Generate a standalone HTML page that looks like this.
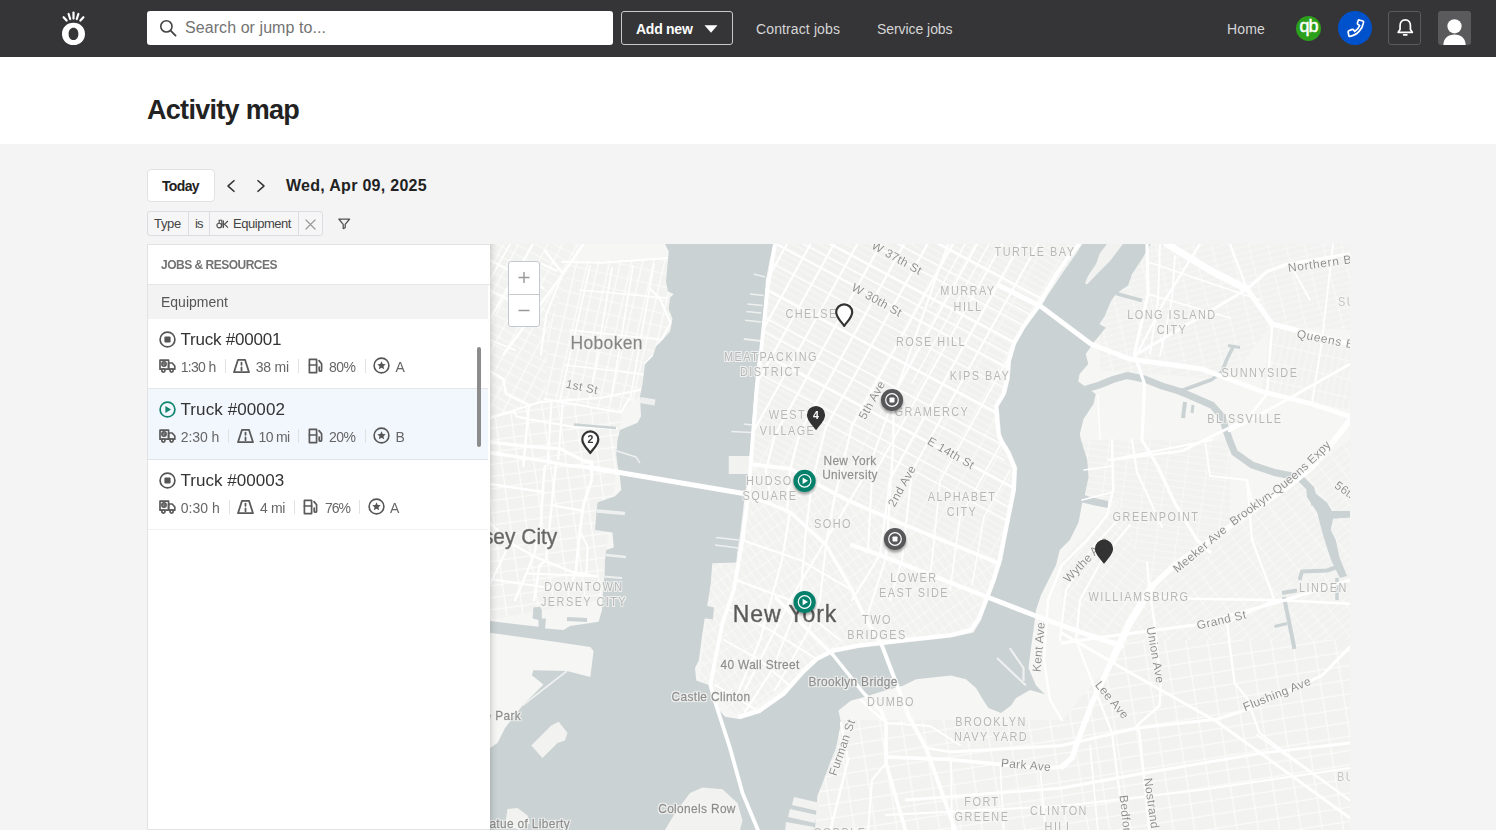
<!DOCTYPE html>
<html lang="en">
<head>
<meta charset="utf-8">
<title>Activity map</title>
<style>
*{box-sizing:border-box;margin:0;padding:0}
html,body{width:1496px;height:830px;overflow:hidden;background:#f4f4f4;font-family:"Liberation Sans",sans-serif;color:#333}
.abs{position:absolute}
.t{position:absolute;white-space:nowrap;line-height:1}
#topbar{position:absolute;left:0;top:0;width:1496px;height:57px;background:#353537}
#search{position:absolute;left:147px;top:11px;width:466px;height:34px;background:#fff;border-radius:3px}
#addnew{position:absolute;left:621px;top:11px;width:112px;height:34px;border:1px solid #c9c9c9;border-radius:3px}
#titleband{position:absolute;left:0;top:57px;width:1496px;height:87px;background:#fff}
#today{position:absolute;left:147px;top:169px;width:68px;height:33px;background:#fff;border:1px solid #e2e2e2;border-radius:4px}
#chip{position:absolute;left:147px;top:211px;width:176px;height:25px;border:1px solid #dcdce2;border-radius:3px;background:#f6f6f6}
#chip i{position:absolute;top:0;width:1px;height:23px;background:#dcdce2}
#panel{position:absolute;left:147px;top:244px;width:343px;height:586px;background:#fff;border:1px solid #e3e3e3;border-right:none}
#phead{position:absolute;left:0;top:0;width:342px;height:40px;border-bottom:1px solid #e6e6e6}
#pgroup{position:absolute;left:0;top:40px;width:340px;height:34px;background:#f3f3f3}
.row{position:absolute;left:0;width:340px;height:71px;border-bottom:1px solid #e4e6ea}
.row.sel{background:#f2f6fd;border-bottom:1px solid #dfe3ea}
.sep{position:absolute;width:1px;height:14px;background:#e2e2e2}
#scroll{position:absolute;left:477px;top:347px;width:4px;height:100px;background:#8c8c8c;border-radius:2px}
#map{position:absolute;left:490px;top:244px;width:860px;height:586px;background:#f6f6f4;overflow:hidden}
#pshadow{position:absolute;left:490px;top:244px;width:8px;height:586px;background:linear-gradient(90deg,rgba(0,0,0,.13),rgba(0,0,0,.04) 45%,rgba(0,0,0,0))}
#zoomctl{position:absolute;left:508px;top:261px;width:32px;height:66px;background:#fff;border:1px solid #c4c8cf;border-radius:3px}
</style>
</head>
<body>
<div id="topbar">
  <svg class="abs" style="left:60px;top:10px" width="28" height="36" viewBox="60 10 28 36">
    <path fill="#fff" fill-rule="evenodd" d="M73.5 22.800c6.600 0 11.500 4.700 11.500 11.100s-4.900 11.100-11.500 11.100S62 40.300 62 33.900s4.900-11.100 11.500-11.100zm0 5c-2.900 0-4.900 2.500-4.900 6.100s2 6.100 4.900 6.100 4.900-2.500 4.900-6.100-2-6.100-4.900-6.100z"/>
    <g stroke="#fff" stroke-width="2.2" stroke-linecap="round">
      <line x1="73.5" y1="12.6" x2="73.5" y2="18.6"/>
      <line x1="68.6" y1="14" x2="70.2" y2="19"/>
      <line x1="78.4" y1="14" x2="76.8" y2="19"/>
      <line x1="63.6" y1="17.2" x2="66.6" y2="20.6"/>
      <line x1="83.4" y1="17.2" x2="80.4" y2="20.6"/>
    </g>
  </svg>
  <div id="search">
    <svg class="abs" style="left:12px;top:8px" width="18" height="18" viewBox="0 0 18 18"><circle cx="7.4" cy="7.4" r="5.6" fill="none" stroke="#444" stroke-width="1.6"/><line x1="11.6" y1="11.6" x2="16.6" y2="16.6" stroke="#444" stroke-width="1.8" stroke-linecap="round"/></svg>
    <span class="t" id="s_search" style="letter-spacing:0.07px;left:38px;top:9px;font-size:16px;color:#737373">Search or jump to...</span>
  </div>
  <div id="addnew">
    <span class="t" id="s_addnew" style="letter-spacing:-0.26px;left:14px;top:10px;font-size:14px;font-weight:bold;color:#fff">Add new</span>
    <svg class="abs" style="left:82px;top:13px" width="14" height="8" viewBox="0 0 14 8"><path d="M0.5 0.3h13L7 7.8z" fill="#fff"/></svg>
  </div>
  <span class="t" id="s_contract" style="letter-spacing:0.12px;left:756px;top:22px;font-size:14px;color:#d6d6d6">Contract jobs</span>
  <span class="t" id="s_service" style="letter-spacing:-0.06px;left:877px;top:22px;font-size:14px;color:#d6d6d6">Service jobs</span>
  <span class="t" id="s_home" style="letter-spacing:0.16px;left:1227px;top:22px;font-size:14px;color:#d6d6d6">Home</span>
  <div class="abs" style="left:1296px;top:16px;width:25px;height:25px;border-radius:50%;background:#2ca01c"></div>
  <span class="t" id="s_qb" style="left:1299.500px;top:17px;font-size:18px;color:#fff;letter-spacing:-1px;-webkit-text-stroke:.5px #fff">qb</span>
  <div class="abs" style="left:1338px;top:11px;width:34px;height:34px;border-radius:50%;background:#0052cc"></div>
  <svg class="abs" style="left:1343.500px;top:16.500px" width="23" height="23" viewBox="0 0 20 20"><path d="M13.2 2.6l3.2.9c.5.2.7.6.6 1.100C16 10.600 11.600 15.800 5.200 16.800c-.5.100-.9-.2-1-.7l-.6-3c-.1-.5.200-.9.600-1.100l3-1.200c.4-.2.900 0 1.100.3l1 1.500c2-1.200 3.500-3 4.300-5.200l-1.500-1c-.4-.3-.5-.7-.4-1.100l.6-2.100c.1-.5.500-.7.900-.6z" fill="none" stroke="#fff" stroke-width="1.500" stroke-linejoin="round"/></svg>
  <div class="abs" style="left:1388px;top:11px;width:33px;height:34px;border:1px solid #5b5b5e;border-radius:3px"></div>
  <svg class="abs" style="left:1393.500px;top:17px" width="22.500" height="22.500" viewBox="0 0 20 20"><path d="M10 2.600c-3 0-4.600 2.300-4.600 5v3.600l-1.700 2.400h12.600l-1.700-2.400V7.600c0-2.700-1.600-5-4.600-5z" fill="none" stroke="#fff" stroke-width="1.500" stroke-linejoin="round"/><path d="M8.600 15.800h2.800" stroke="#fff" stroke-width="1.600" stroke-linecap="round"/></svg>
  <div class="abs" style="left:1438px;top:11px;width:33px;height:34px;background:#5a5a5c;border-radius:3px;overflow:hidden">
    <svg width="33" height="34" viewBox="0 0 33 34"><circle cx="16.500" cy="15.300" r="7.100" fill="#fff"/><path d="M5.300 34.500c0-7.300 4.600-11.100 11.200-11.100s11.200 3.800 11.200 11.100z" fill="#fff"/></svg>
  </div>
</div>
<div id="titleband">
  <span class="t" id="s_title" style="left:147px;top:40px;font-size:27px;font-weight:bold;color:#222;letter-spacing:-0.71px">Activity map</span>
</div>
<div id="today"><span class="t" id="s_today" style="letter-spacing:-0.64px;left:14px;top:9px;font-size:14px;font-weight:bold;color:#222">Today</span></div>
<svg class="abs" style="left:224px;top:178px" width="14" height="16" viewBox="0 0 14 16"><path d="M10.500 2.600L3 8l7.500 5.400" fill="none" stroke="#333" stroke-width="1.600" stroke-linecap="round" stroke-linejoin="round" transform="translate(1.500 0) scale(.82 1)"/></svg>
<svg class="abs" style="left:254px;top:178px" width="14" height="16" viewBox="0 0 14 16"><path d="M3.500 2.600L11 8l-7.500 5.400" fill="none" stroke="#333" stroke-width="1.600" stroke-linecap="round" stroke-linejoin="round" transform="translate(1 0) scale(.82 1)"/></svg>
<span class="t" id="s_date" style="letter-spacing:0.29px;left:286px;top:178px;font-size:16px;font-weight:bold;color:#222">Wed, Apr 09, 2025</span>
<div id="chip">
  <i style="left:40px"></i><i style="left:61px"></i><i style="left:150px"></i>
  <span class="t" id="s_type" style="letter-spacing:-0.3px;left:6px;top:5px;font-size:13px;color:#444">Type</span>
  <span class="t" id="s_is" style="letter-spacing:-0.9px;left:47px;top:5px;font-size:13px;color:#444">is</span>
  <svg class="abs" style="left:68px;top:6px" width="13" height="12" viewBox="0 0 13 12"><g fill="none" stroke="#505050" stroke-width="1.150"><circle cx="3.200" cy="7.500" r="2.300"/><path d="M3.200 5V2.200h2.600v7.300M5.800 6h1.600M7.400 2.500v7.500M12 3L8.400 6.200 12 9.600"/></g></svg>
  <span class="t" id="s_equip" style="letter-spacing:-0.46px;left:85px;top:5px;font-size:13px;color:#444">Equipment</span>
  <svg class="abs" style="left:157px;top:7px" width="11" height="11" viewBox="0 0 11 11"><path d="M1 1l9 9M10 1l-9 9" stroke="#999" stroke-width="1.200" stroke-linecap="round"/></svg>
</div>
<svg class="abs" style="left:337px;top:217px" width="14" height="13" viewBox="0 0 14 13"><path d="M1.800 2h10.800L8.200 7.400v3.300L6.200 11.600V7.400z" fill="none" stroke="#505050" stroke-width="1.250" stroke-linejoin="round"/></svg>

<div id="map"><svg width="860" height="586" viewBox="490 244 860 586" style="position:absolute;left:0;top:0;font-family:'Liberation Sans',sans-serif">
<defs>
<pattern id="gM" width="20.500" height="6.350" patternUnits="userSpaceOnUse" patternTransform="translate(857.060 286.900) rotate(29)"><rect x=".8" y=".7" width="18.900" height="4.950" fill="#f1f2f0"/></pattern>
<pattern id="gH" width="10.7" height="13" patternUnits="userSpaceOnUse" patternTransform="rotate(13)"><rect x="0.7" y="0.45" width="9.3" height="12.1" fill="#f2f3f1"/><path d="M0 0V13" stroke="#fff" stroke-width="1.4" opacity="1"/><path d="M0 0H10.7" stroke="#fff" stroke-width="0.9" opacity="1"/></pattern>
<pattern id="gJ" width="13" height="9" patternUnits="userSpaceOnUse" patternTransform="rotate(28)"><rect x="0.65" y="0.45" width="11.7" height="8.1" fill="#f2f3f1"/><path d="M0 0V9" stroke="#fff" stroke-width="1.3" opacity="0.95"/><path d="M0 0H13" stroke="#fff" stroke-width="0.9" opacity="0.95"/></pattern>
<pattern id="gJ2" width="16" height="12" patternUnits="userSpaceOnUse" patternTransform="rotate(-8)"><rect x="0.7" y="0.6" width="14.6" height="10.8" fill="#f2f3f1"/><path d="M0 0V12" stroke="#fff" stroke-width="1.4" opacity="0.95"/><path d="M0 0H16" stroke="#fff" stroke-width="1.2" opacity="0.95"/></pattern>
<pattern id="gB" width="16" height="6.5" patternUnits="userSpaceOnUse" patternTransform="rotate(-38)"><rect x="0.5" y="0.35" width="15" height="5.8" fill="#f2f3f1"/><path d="M0 0V6.5" stroke="#fff" stroke-width="1" opacity="0.7"/><path d="M0 0H16" stroke="#fff" stroke-width="0.7" opacity="0.7"/></pattern>
<pattern id="gB2" width="21" height="14" patternUnits="userSpaceOnUse" patternTransform="rotate(-9)"><rect x="0.65" y="0.6" width="19.7" height="12.8" fill="#f2f3f1"/><path d="M0 0V14" stroke="#fff" stroke-width="1.3" opacity="0.85"/><path d="M0 0H21" stroke="#fff" stroke-width="1.2" opacity="0.85"/></pattern>
<pattern id="gB4" width="20" height="6.5" patternUnits="userSpaceOnUse" patternTransform="rotate(8)"><rect x="0.5" y="0.35" width="19" height="5.8" fill="#f2f3f1"/><path d="M0 0V6.5" stroke="#fff" stroke-width="1" opacity="0.7"/><path d="M0 0H20" stroke="#fff" stroke-width="0.7" opacity="0.7"/></pattern>
<pattern id="gB3" width="7" height="17" patternUnits="userSpaceOnUse" patternTransform="rotate(-52)"><rect x="0.4" y="0.5" width="6.2" height="16" fill="#f2f3f1"/><path d="M0 0V17" stroke="#fff" stroke-width="0.8" opacity="0.7"/><path d="M0 0H7" stroke="#fff" stroke-width="1" opacity="0.7"/></pattern>
<pattern id="gQ" width="18" height="6" patternUnits="userSpaceOnUse" patternTransform="rotate(-14)"><rect x="0.5" y="0.35" width="17" height="5.3" fill="#f2f3f1"/><path d="M0 0V6" stroke="#fff" stroke-width="1" opacity="0.7"/><path d="M0 0H18" stroke="#fff" stroke-width="0.7" opacity="0.7"/></pattern>
<pattern id="gQ2" width="6.5" height="18" patternUnits="userSpaceOnUse" patternTransform="rotate(12)"><rect x="0.35" y="0.5" width="5.8" height="17" fill="#f2f3f1"/><path d="M0 0V18" stroke="#fff" stroke-width="0.7" opacity="0.7"/><path d="M0 0H6.5" stroke="#fff" stroke-width="1" opacity="0.7"/></pattern>
<pattern id="gL" width="12" height="7" patternUnits="userSpaceOnUse" patternTransform="rotate(55)"><rect x="0.5" y="0.4" width="11" height="6.2" fill="#f2f3f1"/><path d="M0 0V7" stroke="#fff" stroke-width="1" opacity="0.75"/><path d="M0 0H12" stroke="#fff" stroke-width="0.8" opacity="0.75"/></pattern>
<filter id="ds" x="-50%" y="-50%" width="200%" height="200%"><feGaussianBlur stdDeviation="1.300"/></filter>
<filter id="halo" filterUnits="userSpaceOnUse" x="490" y="244" width="860" height="586"><feMorphology in="SourceAlpha" operator="dilate" radius="1" result="d"/><feGaussianBlur in="d" stdDeviation=".45" result="b"/><feFlood flood-color="#f6f6f4" flood-opacity=".85"/><feComposite in2="b" operator="in" result="h"/><feMerge><feMergeNode in="h"/><feMergeNode in="SourceGraphic"/></feMerge></filter>
</defs>
<rect x="490" y="244" width="860" height="586" fill="#f6f6f4"/>
<polygon points="770,244 1085,244 1040,300 1006,400 1018,470 1001,565 749,464" fill="url(#gM)"/>
<polygon points="749,464 1001,565 975,632 900,643 820,660 740,718 700,680 712,563 745,494" fill="url(#gL)"/>
<polygon points="560,262 668,258 672,330 640,396 621,412 545,399 548,330" fill="url(#gH)"/>
<polygon points="490,244 578,244 548,330 545,399 490,420" fill="url(#gJ)"/>
<polygon points="490,420 545,399 621,412 620,440 600,600 490,620" fill="url(#gJ2)"/>
<polygon points="1062,560 1118,500 1150,590 1130,640 1062,640" fill="url(#gB3)"/>
<polygon points="1150,590 1230,525 1350,440 1350,640 1130,640" fill="url(#gB)"/>
<polygon points="1082,440 1230,440 1230,525 1150,590 1118,500 1082,500" fill="url(#gB4)"/>
<polygon points="830,720 1062,720 1130,640 1350,640 1350,830 815,830" fill="url(#gB2)"/>
<polygon points="1100,300 1150,244 1350,244 1350,330 1270,326 1230,380 1100,370" fill="url(#gQ)"/>
<polygon points="1270,326 1350,344 1350,410 1262,391" fill="url(#gQ2)"/>
<polyline points="936,242.26 1080,319.3" fill="none" stroke="#fff" stroke-width="2.4" stroke-linejoin="round" stroke-linecap="round"/>
<polyline points="775,214.425 1045,358.875" fill="none" stroke="#fff" stroke-width="2.4" stroke-linejoin="round" stroke-linecap="round"/>
<polyline points="770,240.75 1030,379.85" fill="none" stroke="#fff" stroke-width="2" stroke-linejoin="round" stroke-linecap="round"/>
<polyline points="760,286.2 1015,422.625" fill="none" stroke="#fff" stroke-width="2.4" stroke-linejoin="round" stroke-linecap="round"/>
<polyline points="752,347.82 1020,491.2" fill="none" stroke="#fff" stroke-width="2.6" stroke-linejoin="round" stroke-linecap="round"/>
<polyline points="790,200.55 1060,345" fill="none" stroke="#fff" stroke-width="1.4" stroke-linejoin="round" stroke-linecap="round"/>
<polyline points="790,186.15 1070,335.95" fill="none" stroke="#fff" stroke-width="1.3" stroke-linejoin="round" stroke-linecap="round"/>
<polyline points="772,227.32 1040,370.7" fill="none" stroke="#fff" stroke-width="1.3" stroke-linejoin="round" stroke-linecap="round"/>
<polyline points="765,259.775 1025,398.875" fill="none" stroke="#fff" stroke-width="1.3" stroke-linejoin="round" stroke-linecap="round"/>
<polyline points="756,312.96 1012,449.92" fill="none" stroke="#fff" stroke-width="1.3" stroke-linejoin="round" stroke-linecap="round"/>
<polyline points="756,327.46 1004,460.14" fill="none" stroke="#fff" stroke-width="1.3" stroke-linejoin="round" stroke-linecap="round"/>
<polyline points="752,369.62 1018,511.93" fill="none" stroke="#fff" stroke-width="1.3" stroke-linejoin="round" stroke-linecap="round"/>
<polyline points="800,409.8 1020,527.5" fill="none" stroke="#fff" stroke-width="1.3" stroke-linejoin="round" stroke-linecap="round"/>
<polyline points="787,244 762,289" fill="none" stroke="#fff" stroke-width="1.8" stroke-linejoin="round" stroke-linecap="round"/>
<polyline points="810.6,244 752,350" fill="none" stroke="#fff" stroke-width="2" stroke-linejoin="round" stroke-linecap="round"/>
<polyline points="834,244 748,399" fill="none" stroke="#fff" stroke-width="2" stroke-linejoin="round" stroke-linecap="round"/>
<polyline points="857.4,244 752,434 750,470" fill="none" stroke="#fff" stroke-width="2" stroke-linejoin="round" stroke-linecap="round"/>
<polyline points="880.8,244 775,435 766,470 770,494" fill="none" stroke="#fff" stroke-width="2.2" stroke-linejoin="round" stroke-linecap="round"/>
<polyline points="904.2,244 800,432 790,470 787,512" fill="none" stroke="#fff" stroke-width="2.2" stroke-linejoin="round" stroke-linecap="round"/>
<polyline points="927.6,244 826,427 812,482 806,530" fill="none" stroke="#fff" stroke-width="2.2" stroke-linejoin="round" stroke-linecap="round"/>
<polyline points="953,244 852,426 834,500 826,545" fill="none" stroke="#fff" stroke-width="2.2" stroke-linejoin="round" stroke-linecap="round"/>
<polyline points="965,244 930,307" fill="none" stroke="#fff" stroke-width="1.4" stroke-linejoin="round" stroke-linecap="round"/>
<polyline points="977,244 893,396 893.5,440 886,557.5 866,620" fill="none" stroke="#fff" stroke-width="2.2" stroke-linejoin="round" stroke-linecap="round"/>
<polyline points="989,244 912,383" fill="none" stroke="#fff" stroke-width="1.4" stroke-linejoin="round" stroke-linecap="round"/>
<polyline points="1002,244 926,381 872,478 868,548" fill="none" stroke="#fff" stroke-width="2" stroke-linejoin="round" stroke-linecap="round"/>
<polyline points="1020,244 890,479 880,555 852,600" fill="none" stroke="#fff" stroke-width="2" stroke-linejoin="round" stroke-linecap="round"/>
<polyline points="1038,244 912,471 902,560 890,600" fill="none" stroke="#fff" stroke-width="2" stroke-linejoin="round" stroke-linecap="round"/>
<polyline points="1016,344 940,481 930,580" fill="none" stroke="#fff" stroke-width="1.6" stroke-linejoin="round" stroke-linecap="round"/>
<polyline points="1003,440 960,517 950,590" fill="none" stroke="#fff" stroke-width="1.6" stroke-linejoin="round" stroke-linecap="round"/>
<polyline points="1010,470 984,517 972,585" fill="none" stroke="#fff" stroke-width="1.4" stroke-linejoin="round" stroke-linecap="round"/>
<polyline points="948,244 893,400 868,470 838,520 790,600 745,690" fill="none" stroke="#fff" stroke-width="2" stroke-linejoin="round" stroke-linecap="round"/>
<polyline points="749,464 791,468.8 816.4,484 847,500 900,523 991,560 1001,565" fill="none" stroke="#fff" stroke-width="3.8" stroke-linejoin="round" stroke-linecap="round"/>
<polyline points="852,545 886,557.5 988.5,597.5" fill="none" stroke="#fff" stroke-width="4.4" stroke-linejoin="round" stroke-linecap="round"/>
<polyline points="745,493.75 790,512 826,545 852,590 866,620" fill="none" stroke="#fff" stroke-width="3.4" stroke-linejoin="round" stroke-linecap="round"/>
<polyline points="776,598 808.5,630.5" fill="none" stroke="#fff" stroke-width="3.4" stroke-linejoin="round" stroke-linecap="round"/>
<polyline points="742,540 800,560 852,590" fill="none" stroke="#fff" stroke-width="2" stroke-linejoin="round" stroke-linecap="round"/>
<polyline points="736,580 790,600 840,640" fill="none" stroke="#fff" stroke-width="2" stroke-linejoin="round" stroke-linecap="round"/>
<polyline points="730,610 770,630 815,658" fill="none" stroke="#fff" stroke-width="2" stroke-linejoin="round" stroke-linecap="round"/>
<polyline points="724,640 760,660 790,686" fill="none" stroke="#fff" stroke-width="1.8" stroke-linejoin="round" stroke-linecap="round"/>
<polyline points="790,512 782,560 760,640 735,700" fill="none" stroke="#fff" stroke-width="2" stroke-linejoin="round" stroke-linecap="round"/>
<polyline points="806,530 800,600 772,670 745,712" fill="none" stroke="#fff" stroke-width="2" stroke-linejoin="round" stroke-linecap="round"/>
<polyline points="826,545 820,600 808.5,630.5 775,690" fill="none" stroke="#fff" stroke-width="2" stroke-linejoin="round" stroke-linecap="round"/>
<polyline points="715,685 740,700 760,712" fill="none" stroke="#fff" stroke-width="2" stroke-linejoin="round" stroke-linecap="round"/>
<polyline points="490,442 523.4,446 559.6,448.6 583.6,460.7 591.7,462" fill="none" stroke="#fff" stroke-width="3.4" stroke-linejoin="round" stroke-linecap="round"/>
<polyline points="490,452.7 543.5,460.7 570,465.8 590,467.5" fill="none" stroke="#fff" stroke-width="3.4" stroke-linejoin="round" stroke-linecap="round"/>
<polyline points="528.8,407.2 523.4,465.8" fill="none" stroke="#fff" stroke-width="2.4" stroke-linejoin="round" stroke-linecap="round"/>
<polyline points="551.5,401.8 547.5,465.8" fill="none" stroke="#fff" stroke-width="2" stroke-linejoin="round" stroke-linecap="round"/>
<polyline points="563,400.5 558.2,459.3" fill="none" stroke="#fff" stroke-width="2" stroke-linejoin="round" stroke-linecap="round"/>
<polyline points="544.8,399 621,412.5 629,399" fill="none" stroke="#fff" stroke-width="2.2" stroke-linejoin="round" stroke-linecap="round"/>
<polyline points="530,405.8 506,393.8 503.4,379 490,371" fill="none" stroke="#fff" stroke-width="2.4" stroke-linejoin="round" stroke-linecap="round"/>
<polyline points="490,417.9 514,411.2 516.8,416.5 528.8,419.2 575.6,427.2 617,428.6" fill="none" stroke="#fff" stroke-width="2" stroke-linejoin="round" stroke-linecap="round"/>
<polyline points="490,418 540,402 600,398 640,390" fill="none" stroke="#fff" stroke-width="2" stroke-linejoin="round" stroke-linecap="round"/>
<polyline points="591.7,462 591.7,480 583.6,504 579.6,533.5 575.6,573.6 573,579" fill="none" stroke="#fff" stroke-width="2.8" stroke-linejoin="round" stroke-linecap="round"/>
<polyline points="581,533.5 587.7,546.9 586.3,576.3" fill="none" stroke="#fff" stroke-width="2" stroke-linejoin="round" stroke-linecap="round"/>
<polyline points="545,466 543.5,480 540.8,524 534,555 522,584 515,600" fill="none" stroke="#fff" stroke-width="2.4" stroke-linejoin="round" stroke-linecap="round"/>
<polyline points="556,466 554.2,480 548.9,533.5 546.2,560 539.5,565.6 536.8,584.3 534,600" fill="none" stroke="#fff" stroke-width="2.4" stroke-linejoin="round" stroke-linecap="round"/>
<polyline points="490,484 543.5,492" fill="none" stroke="#fff" stroke-width="2.4" stroke-linejoin="round" stroke-linecap="round"/>
<polyline points="552.9,505.4 582.3,510.8" fill="none" stroke="#fff" stroke-width="2.4" stroke-linejoin="round" stroke-linecap="round"/>
<polyline points="490,522.8 512.7,544.2 534,556.3 573,572.3 595.7,576.3" fill="none" stroke="#fff" stroke-width="2.4" stroke-linejoin="round" stroke-linecap="round"/>
<polyline points="507.4,548.2 490,584.3" fill="none" stroke="#fff" stroke-width="2" stroke-linejoin="round" stroke-linecap="round"/>
<polyline points="490,579 543.5,587 575,590" fill="none" stroke="#fff" stroke-width="2" stroke-linejoin="round" stroke-linecap="round"/>
<polyline points="527.5,573.6 597,576.3" fill="none" stroke="#fff" stroke-width="2" stroke-linejoin="round" stroke-linecap="round"/>
<polyline points="490,319 532.8,244" fill="none" stroke="#fff" stroke-width="2" stroke-linejoin="round" stroke-linecap="round"/>
<polyline points="503.4,354.8 562.2,274.8 583.6,244" fill="none" stroke="#fff" stroke-width="2.4" stroke-linejoin="round" stroke-linecap="round"/>
<polyline points="540.8,354.8 546.2,315 562.2,274.8" fill="none" stroke="#fff" stroke-width="2" stroke-linejoin="round" stroke-linecap="round"/>
<polyline points="490,260 543.5,288" fill="none" stroke="#fff" stroke-width="1.8" stroke-linejoin="round" stroke-linecap="round"/>
<polyline points="544.8,250.7 562.2,272.8" fill="none" stroke="#fff" stroke-width="2.4" stroke-linejoin="round" stroke-linecap="round"/>
<polyline points="542,264 556.9,270.8" fill="none" stroke="#fff" stroke-width="2" stroke-linejoin="round" stroke-linecap="round"/>
<polyline points="490,290 530,310" fill="none" stroke="#fff" stroke-width="1.6" stroke-linejoin="round" stroke-linecap="round"/>
<polyline points="490,340 515,350" fill="none" stroke="#fff" stroke-width="1.6" stroke-linejoin="round" stroke-linecap="round"/>
<polyline points="510,244 490,280" fill="none" stroke="#fff" stroke-width="1.6" stroke-linejoin="round" stroke-linecap="round"/>
<polyline points="601,262.7 668,258" fill="none" stroke="#fff" stroke-width="2" stroke-linejoin="round" stroke-linecap="round"/>
<polyline points="562,262 601,262.7" fill="none" stroke="#fff" stroke-width="1.8" stroke-linejoin="round" stroke-linecap="round"/>
<polyline points="649.2,288 660,298.8 670.6,323 662.6,337.6 653.2,354.8 645,364" fill="none" stroke="#fff" stroke-width="2" stroke-linejoin="round" stroke-linecap="round"/>
<polyline points="590,266 560,400" fill="none" stroke="#fff" stroke-width="1.6" stroke-linejoin="round" stroke-linecap="round"/>
<polyline points="612,268 590,398" fill="none" stroke="#fff" stroke-width="1.6" stroke-linejoin="round" stroke-linecap="round"/>
<polyline points="633,266 611,400" fill="none" stroke="#fff" stroke-width="1.6" stroke-linejoin="round" stroke-linecap="round"/>
<polyline points="654,264 630,400" fill="none" stroke="#fff" stroke-width="1.6" stroke-linejoin="round" stroke-linecap="round"/>
<polyline points="570,330 665,340" fill="none" stroke="#fff" stroke-width="1.4" stroke-linejoin="round" stroke-linecap="round"/>
<polyline points="580,290 667,298" fill="none" stroke="#fff" stroke-width="1.4" stroke-linejoin="round" stroke-linecap="round"/>
<polyline points="565,365 650,375" fill="none" stroke="#fff" stroke-width="1.4" stroke-linejoin="round" stroke-linecap="round"/>
<polygon points="665,244 668.75,251.5 666,281.5 668,291.5 673.75,294 670,297.75 668.75,309 672.5,319 670,331.5 662.5,340 656,346.5 652.5,356.5 645,364 642.5,384 640,396.5 641,416.5 637.5,422.75 620,430 617.5,440 616.25,455 617.5,465 620,477.5 621.25,490 615,496.25 597.5,502.5 596.25,515 595,530 612.5,532.5 613.75,547.5 606.25,550 605,560 604.5,576.7 603.6,581.7 602,610 598.6,621.8 587,623.5 570,626 563.5,630 545,628.5 546,618.5 541.8,618.5 541.8,610 540,606.8 533.4,607.6 532.6,618.5 538.5,620 538.5,626.8 490,621 490,632.7 556.8,641.9 590.3,646.9 593.6,651 590.3,677 566.9,671 533.4,670.3 531.8,675.3 543.5,684.5 522.5,705.5 505,728 497.5,743 490,748 490,830 815,830 817.5,795.5 822.5,783 830,763 836,748 841,723 838.5,710.5 851,700.5 861,698 881,691.75 903.5,685.5 916,679.25 951,675.5 966,679.25 976,688 983.5,700.5 988.5,708 1001,713 1011,705.5 1016,698 1030,690 1044.75,694.25 1036,685.5 1028.5,668 1031,648 1033.5,630 1036,610 1041,595 1048.5,580 1056,565 1059.75,550 1069.75,540 1078.5,522.5 1082.25,502.5 1095,505.5 1108,508 1108,501 1090,497 1084.75,495 1088.5,477.5 1087.25,460 1081,440 1079.75,434 1083.5,419 1093.5,404 1095.75,394 1087,387.75 1078.25,381.5 1079.5,374 1088.25,364 1085.75,354 1094.5,341.5 1105.75,327.75 1099.5,324 1104.5,316.5 1110.75,301.5 1115.75,294 1128.25,285.25 1132,274 1142,259 1150.75,244 1082.25,244 1076,254 1063.5,271.5 1048.5,294 1041,306.5 1026,326.5 1016,344 1011,361.5 1009.75,379 1006,394 998.5,406.5 999.75,419 1001,434 1003.5,440 1011,452.5 1017.25,467.5 1016,490 1011,515 1006,540 1002.25,560 996,580 988.5,600 981,620 973.5,632.5 951,637.5 901,643 858.5,648 833.5,653 818.5,660.5 805,673 785,695.5 760,713 740,719.25 725,716.75 715,705.5 710,685.5 696.25,680.5 695,668 698.75,660.5 702.2,635.2 704.7,618.5 713,619.3 713.9,607.6 707.2,606 710.6,585 712.3,563.3 736.25,562.5 737.5,550 740,535 742.5,515 745,493.75 748.75,475 750,455 751.25,440 752.5,419 755,384 757.5,361.5 761,344 763.75,309 766,279 770,259 773.25,244" fill="#cad2d3"/>
<polygon points="1306,486 1327,502.5 1332,511 1350,511 1350,517.5 1333,518.75 1330.75,530 1335.75,540 1339.5,557.5 1347,576 1340,578 1331,560 1323,535 1317,512 1307,497" fill="#cad2d3"/>
<polyline points="1086,389 1099.5,385 1113,379.5 1127,375.5 1144.5,379 1162,386 1179.5,391.25 1192,396.5 1212,405.25 1222,416.5 1225.75,429 1229.5,440 1234.5,452.5 1252,465 1274.5,472.5 1299.5,477.5 1311,489 1315,505" fill="none" stroke="#cad2d3" stroke-width="7" stroke-linejoin="round" stroke-linecap="butt"/>
<polyline points="1179.5,391.25 1197,385 1212,379.5 1222,371.5 1227,359 1233.25,346.5" fill="none" stroke="#cad2d3" stroke-width="3.5" stroke-linejoin="round" stroke-linecap="butt"/>
<polyline points="1228,345.5 1240,347.5" fill="none" stroke="#cad2d3" stroke-width="3" stroke-linejoin="round" stroke-linecap="butt"/>
<polyline points="1185,402 1183,418" fill="none" stroke="#cad2d3" stroke-width="4" stroke-linejoin="round" stroke-linecap="butt"/>
<polyline points="1193,405 1192,413" fill="none" stroke="#cad2d3" stroke-width="3" stroke-linejoin="round" stroke-linecap="butt"/>
<polyline points="1116,293.5 1142,300.5" fill="none" stroke="#cad2d3" stroke-width="3.5" stroke-linejoin="round" stroke-linecap="butt"/>
<polyline points="1340,566 1327,570.5 1302,571.5 1299.5,580" fill="none" stroke="#cad2d3" stroke-width="4" stroke-linejoin="round" stroke-linecap="butt"/>
<polyline points="1337,578 1337,600" fill="none" stroke="#cad2d3" stroke-width="3.5" stroke-linejoin="round" stroke-linecap="butt"/>
<polyline points="1282,593 1297,590.5" fill="none" stroke="#cad2d3" stroke-width="4" stroke-linejoin="round" stroke-linecap="butt"/>
<polyline points="1284,597 1294.5,649" fill="none" stroke="#cad2d3" stroke-width="4" stroke-linejoin="round" stroke-linecap="butt"/>
<polyline points="1274.5,626.5 1287,623.5" fill="none" stroke="#cad2d3" stroke-width="3" stroke-linejoin="round" stroke-linecap="butt"/>
<polyline points="567,619 587,620" fill="none" stroke="#cad2d3" stroke-width="4" stroke-linejoin="round" stroke-linecap="butt"/>
<polyline points="574,424.5 616,428" fill="none" stroke="#cad2d3" stroke-width="2.6" stroke-linejoin="round" stroke-linecap="butt"/>
<polygon points="1107,244 1100,253 1096,264 1088,276 1085,283 1087,284.5 1098,273 1110,261 1123,244" fill="#f2f3f1"/>
<polygon points="531.25,745.5 543.75,733 551.25,725.5 558.75,721.75 567.5,733 565,740.5 557.5,743 551.25,749.25 542.5,758" fill="#f2f3f1"/>
<polygon points="507.5,809 517.5,808 527.5,815.5 530,823 520,830 505,826" fill="#f2f3f1"/>
<polygon points="665,830 675,813 690,793 702.5,787.5 722.5,789.25 737.5,803 742.5,820.5 740,830" fill="#f2f3f1"/>
<polygon points="728.75,456 750.5,456 749,474 728.75,474" fill="#f2f3f1"/>
<polygon points="794,797 820,803 818,811 792,805" fill="#f2f3f1"/>
<polygon points="790,809 817,815 815,823 788,817" fill="#f2f3f1"/>
<polygon points="786,822 814,827 813,832 785,832" fill="#f2f3f1"/>
<polyline points="753.75,274 765,277" fill="none" stroke="#eef0ef" stroke-width="1.6" stroke-linejoin="round" stroke-linecap="butt"/>
<polyline points="750,294 763.75,295.5" fill="none" stroke="#eef0ef" stroke-width="1.6" stroke-linejoin="round" stroke-linecap="butt"/>
<polyline points="747.5,304 762.5,305.5" fill="none" stroke="#eef0ef" stroke-width="1.6" stroke-linejoin="round" stroke-linecap="butt"/>
<polyline points="746.25,311.5 761.25,313" fill="none" stroke="#eef0ef" stroke-width="1.6" stroke-linejoin="round" stroke-linecap="butt"/>
<polyline points="745,320.25 761.25,322" fill="none" stroke="#eef0ef" stroke-width="1.6" stroke-linejoin="round" stroke-linecap="butt"/>
<polyline points="743.75,339 761.25,341" fill="none" stroke="#eef0ef" stroke-width="2" stroke-linejoin="round" stroke-linecap="butt"/>
<polyline points="743.75,424 752.5,425" fill="none" stroke="#eef0ef" stroke-width="1.4" stroke-linejoin="round" stroke-linecap="butt"/>
<polyline points="731.25,431.5 751.25,432.5" fill="none" stroke="#eef0ef" stroke-width="1.4" stroke-linejoin="round" stroke-linecap="butt"/>
<polyline points="716,537.5 738.75,540" fill="none" stroke="#eef0ef" stroke-width="1.6" stroke-linejoin="round" stroke-linecap="butt"/>
<polyline points="715,545 738.75,548" fill="none" stroke="#eef0ef" stroke-width="1.6" stroke-linejoin="round" stroke-linecap="butt"/>
<polyline points="597,511 625,513.5" fill="none" stroke="#eef0ef" stroke-width="3.5" stroke-linejoin="round" stroke-linecap="butt"/>
<polyline points="606,555 626,557" fill="none" stroke="#eef0ef" stroke-width="2.5" stroke-linejoin="round" stroke-linecap="butt"/>
<polyline points="603,576.5 622,578" fill="none" stroke="#eef0ef" stroke-width="2" stroke-linejoin="round" stroke-linecap="butt"/>
<polyline points="640,400 655,402.5" fill="none" stroke="#eef0ef" stroke-width="6" stroke-linejoin="round" stroke-linecap="butt"/>
<polyline points="997,658 1026,685.5" fill="none" stroke="#eef0ef" stroke-width="2.2" stroke-linejoin="round" stroke-linecap="butt"/>
<polyline points="1009.75,648 1023.5,668 1023.5,681" fill="none" stroke="#eef0ef" stroke-width="2.2" stroke-linejoin="round" stroke-linecap="butt"/>
<polyline points="617,451 636,457 640,463" fill="none" stroke="#eef0ef" stroke-width="1.4" stroke-linejoin="round" stroke-linecap="butt"/>
<polyline points="566.9,671 522.5,705.5" fill="none" stroke="#eef0ef" stroke-width="1.6" stroke-linejoin="round" stroke-linecap="butt"/>
<polyline points="775,244 767.5,289 761.25,349 756.25,394 752.5,440 748.75,490 742.5,540 733.75,590 722.5,623 715,660.5 710.5,685.5 716.25,705.5 730,748 742.5,793 758.75,832" fill="none" stroke="#fff" stroke-width="3.8" stroke-linejoin="round" stroke-linecap="round"/>
<polyline points="590,467.5 745,493.75" fill="none" stroke="#fff" stroke-width="5.2" stroke-linejoin="round" stroke-linecap="round"/>
<polyline points="866,620 881,643 908.5,715.5 926,748 956,832" fill="none" stroke="#fff" stroke-width="4" stroke-linejoin="round" stroke-linecap="round"/>
<polyline points="808.5,630.5 833.5,655.5 863.5,693 881,710.5 886,723 886,763 896,798 906,832" fill="none" stroke="#fff" stroke-width="3.6" stroke-linejoin="round" stroke-linecap="round"/>
<polyline points="1079,244 1067,259 1056,275 1041,300 1038,306.5 1023.5,326.5 1013.5,344 1008.5,361.5 1007,379 1003.5,394 996,406.5 997,419 998.5,434 1001,441 1008.5,453.5 1014.5,468 1013.5,490 1008.5,515 1003.5,540 999.5,560 993.5,580 986,600 978.5,619 971,630 951,635 901,640.5 858.5,645.5 833,650.5 817,658.5 803,671.5 783.5,693.5 759,711 740,716.5" fill="none" stroke="#fff" stroke-width="4" stroke-linejoin="round" stroke-linecap="round"/>
<polyline points="988.5,597.5 1033.5,615 1088.5,635 1122,646" fill="none" stroke="#fff" stroke-width="5" stroke-linejoin="round" stroke-linecap="round"/>
<polyline points="1000,286 1041,306.5 1091,344 1129.5,359 1202,369 1262,391.5 1312,404 1350,416.5" fill="none" stroke="#fff" stroke-width="4.8" stroke-linejoin="round" stroke-linecap="round"/>
<polyline points="1167,244 1212,271.5 1247,289" fill="none" stroke="#fff" stroke-width="7" stroke-linejoin="round" stroke-linecap="round"/>
<polyline points="1247,289 1272,324 1350,344" fill="none" stroke="#fff" stroke-width="5" stroke-linejoin="round" stroke-linecap="round"/>
<polyline points="1247,289 1267,271.5 1287,264 1350,254" fill="none" stroke="#fff" stroke-width="3" stroke-linejoin="round" stroke-linecap="round"/>
<polyline points="1137,354 1222,304 1247,289" fill="none" stroke="#fff" stroke-width="3" stroke-linejoin="round" stroke-linecap="round"/>
<polyline points="1147,244 1148,294 1134.5,354 1144.5,384 1142,440 1157,465 1174.5,502.5 1197,540 1210,552" fill="none" stroke="#fff" stroke-width="3.2" stroke-linejoin="round" stroke-linecap="round"/>
<polyline points="1272,326.5 1267,394 1247,419 1182,451 1109.5,460" fill="none" stroke="#fff" stroke-width="2.6" stroke-linejoin="round" stroke-linecap="round"/>
<polyline points="1350,364 1297,394 1252,419 1229,431" fill="none" stroke="#fff" stroke-width="2.6" stroke-linejoin="round" stroke-linecap="round"/>
<polyline points="1200,244 1165,300 1137,354" fill="none" stroke="#fff" stroke-width="2.4" stroke-linejoin="round" stroke-linecap="round"/>
<polyline points="1230,244 1247,289" fill="none" stroke="#fff" stroke-width="2.2" stroke-linejoin="round" stroke-linecap="round"/>
<polyline points="1333,244 1322,340 1312,404" fill="none" stroke="#fff" stroke-width="1.8" stroke-linejoin="round" stroke-linecap="round"/>
<polyline points="1160,244 1158,300 1150,354" fill="none" stroke="#fff" stroke-width="1.8" stroke-linejoin="round" stroke-linecap="round"/>
<polyline points="1175,256 1172,300 1160,356" fill="none" stroke="#fff" stroke-width="1.8" stroke-linejoin="round" stroke-linecap="round"/>
<polyline points="1148,262 1260,300" fill="none" stroke="#fff" stroke-width="1.6" stroke-linejoin="round" stroke-linecap="round"/>
<polyline points="1148,294 1230,318" fill="none" stroke="#fff" stroke-width="1.6" stroke-linejoin="round" stroke-linecap="round"/>
<polyline points="1290,264 1310,300" fill="none" stroke="#fff" stroke-width="1.6" stroke-linejoin="round" stroke-linecap="round"/>
<polyline points="1100,440 1098,395" fill="none" stroke="#fff" stroke-width="1.4" stroke-linejoin="round" stroke-linecap="round"/>
<polyline points="1350,420 1334.5,440 1312,467.5 1287,487.5 1232,525 1174.5,565 1151.7,586.8" fill="none" stroke="#fff" stroke-width="5.4" stroke-linejoin="round" stroke-linecap="round"/>
<polyline points="1151.7,586.8 1129.5,623 1112,660.5" fill="none" stroke="#fff" stroke-width="7.5" stroke-linejoin="round" stroke-linecap="round"/>
<polyline points="1112,660.5 1092,703 1077,743 1072,758 1062,766.75" fill="none" stroke="#fff" stroke-width="5.5" stroke-linejoin="round" stroke-linecap="round"/>
<polyline points="1062,766.75 1041,768.5 951,759.5 886,757" fill="none" stroke="#fff" stroke-width="3.6" stroke-linejoin="round" stroke-linecap="round"/>
<polyline points="1062,643 1099.5,637.5 1194.5,625 1277,602.5 1350,580" fill="none" stroke="#fff" stroke-width="3" stroke-linejoin="round" stroke-linecap="round"/>
<polyline points="1147,596 1192,598.75 1277,600 1350,603.75" fill="none" stroke="#fff" stroke-width="2.4" stroke-linejoin="round" stroke-linecap="round"/>
<polyline points="1112,440 1113.25,490 1107,515 1087,540 1062,565 1048,600 1044,660 1050,700 1062,720" fill="none" stroke="#fff" stroke-width="2.4" stroke-linejoin="round" stroke-linecap="round"/>
<polyline points="1118,520 1092,548 1066,590 1060,640" fill="none" stroke="#fff" stroke-width="2" stroke-linejoin="round" stroke-linecap="round"/>
<polyline points="1130,525 1104,556 1080,600 1076,640 1112,733 1124.5,832" fill="none" stroke="#fff" stroke-width="2.2" stroke-linejoin="round" stroke-linecap="round"/>
<polyline points="1147,562.5 1149.5,590 1154.5,623 1160.75,685.5 1159.5,705.5 1137,725.5 1139.5,733 1149.5,832" fill="none" stroke="#fff" stroke-width="2.4" stroke-linejoin="round" stroke-linecap="round"/>
<polyline points="1247,480 1252,540 1274.5,600 1227,623 1234.5,683 1247,698 1259.5,733 1282,750.5 1350,800.5" fill="none" stroke="#fff" stroke-width="2.2" stroke-linejoin="round" stroke-linecap="round"/>
<polyline points="1109.5,460 1212,440" fill="none" stroke="#fff" stroke-width="2.2" stroke-linejoin="round" stroke-linecap="round"/>
<polyline points="1132,440 1137,472 1162,527" fill="none" stroke="#fff" stroke-width="2" stroke-linejoin="round" stroke-linecap="round"/>
<polyline points="1082,500 1113,492" fill="none" stroke="#fff" stroke-width="1.6" stroke-linejoin="round" stroke-linecap="round"/>
<polyline points="1084,470 1113,466" fill="none" stroke="#fff" stroke-width="1.6" stroke-linejoin="round" stroke-linecap="round"/>
<polyline points="1210,476 1247,480 1252,500" fill="none" stroke="#fff" stroke-width="1.8" stroke-linejoin="round" stroke-linecap="round"/>
<polyline points="1210,476 1205,440" fill="none" stroke="#fff" stroke-width="1.8" stroke-linejoin="round" stroke-linecap="round"/>
<polyline points="1062,633 1122,668 1217,721.75 1350,818" fill="none" stroke="#fff" stroke-width="2.8" stroke-linejoin="round" stroke-linecap="round"/>
<polyline points="951,752 1062,745.5 1137,728 1217,719.25 1252,708 1322,675.5 1350,646.75" fill="none" stroke="#fff" stroke-width="3" stroke-linejoin="round" stroke-linecap="round"/>
<polyline points="906,800 1062,788 1144.5,773 1262,753 1350,743" fill="none" stroke="#fff" stroke-width="2.8" stroke-linejoin="round" stroke-linecap="round"/>
<polyline points="886,815 1062,806 1200,790 1350,768" fill="none" stroke="#fff" stroke-width="2" stroke-linejoin="round" stroke-linecap="round"/>
<polyline points="1257,735 1350,800" fill="none" stroke="#fff" stroke-width="1.8" stroke-linejoin="round" stroke-linecap="round"/>
<polyline points="841,723 848,760 838,800 830,832" fill="none" stroke="#fff" stroke-width="2.4" stroke-linejoin="round" stroke-linecap="round"/>
<polyline points="861,700 886,723" fill="none" stroke="#fff" stroke-width="2.4" stroke-linejoin="round" stroke-linecap="round"/>
<polyline points="886,723 930,726 960,745" fill="none" stroke="#fff" stroke-width="2" stroke-linejoin="round" stroke-linecap="round"/>
<polyline points="868,832 872,780 886,763" fill="none" stroke="#fff" stroke-width="2" stroke-linejoin="round" stroke-linecap="round"/>
<polyline points="926,748 951,752" fill="none" stroke="#fff" stroke-width="2.4" stroke-linejoin="round" stroke-linecap="round"/>
<polyline points="951,759.5 952,832" fill="none" stroke="#fff" stroke-width="1.8" stroke-linejoin="round" stroke-linecap="round"/>
<polyline points="1000,762 1004,832" fill="none" stroke="#fff" stroke-width="1.6" stroke-linejoin="round" stroke-linecap="round"/>
<polyline points="1040,768 1046,832" fill="none" stroke="#fff" stroke-width="1.6" stroke-linejoin="round" stroke-linecap="round"/>
<polyline points="1090,745 1098,832" fill="none" stroke="#fff" stroke-width="1.6" stroke-linejoin="round" stroke-linecap="round"/>
<g filter="url(#halo)">
<text x="606.7" y="343" font-size="17.5" letter-spacing="0.35" text-anchor="middle" dominant-baseline="central" font-weight="normal" fill="#868686" stroke="#868686" stroke-width=".3">Hoboken</text>
<text x="785" y="614.4" font-size="23" letter-spacing="0.9" text-anchor="middle" dominant-baseline="central" font-weight="normal" fill="#5a5a5a" stroke="#5a5a5a" stroke-width=".55">New York</text>
<text x="816" y="314" font-size="12" letter-spacing="1.6" text-anchor="middle" dominant-baseline="central" font-weight="normal" transform="translate(816 0) scale(0.91 1) translate(-816 0)" fill="#b6b6b6">CHELSEA</text>
<text x="771" y="357" font-size="12" letter-spacing="1.6" text-anchor="middle" dominant-baseline="central" font-weight="normal" transform="translate(771 0) scale(0.91 1) translate(-771 0)" fill="#b6b6b6">MEATPACKING</text>
<text x="771" y="372" font-size="12" letter-spacing="1.6" text-anchor="middle" dominant-baseline="central" font-weight="normal" transform="translate(771 0) scale(0.91 1) translate(-771 0)" fill="#b6b6b6">DISTRICT</text>
<text x="787.5" y="415" font-size="12" letter-spacing="1.6" text-anchor="middle" dominant-baseline="central" font-weight="normal" transform="translate(787.5 0) scale(0.91 1) translate(-787.5 0)" fill="#b6b6b6">WEST</text>
<text x="787.5" y="431" font-size="12" letter-spacing="1.6" text-anchor="middle" dominant-baseline="central" font-weight="normal" transform="translate(787.5 0) scale(0.91 1) translate(-787.5 0)" fill="#b6b6b6">VILLAGE</text>
<text x="774" y="481" font-size="12" letter-spacing="1.6" text-anchor="middle" dominant-baseline="central" font-weight="normal" transform="translate(774 0) scale(0.91 1) translate(-774 0)" fill="#b6b6b6">HUDSON</text>
<text x="770" y="496" font-size="12" letter-spacing="1.6" text-anchor="middle" dominant-baseline="central" font-weight="normal" transform="translate(770 0) scale(0.91 1) translate(-770 0)" fill="#b6b6b6">SQUARE</text>
<text x="833" y="524" font-size="12" letter-spacing="1.6" text-anchor="middle" dominant-baseline="central" font-weight="normal" transform="translate(833 0) scale(0.91 1) translate(-833 0)" fill="#b6b6b6">SOHO</text>
<text x="850" y="461" font-size="11.9" letter-spacing="0.35" text-anchor="middle" dominant-baseline="central" font-weight="normal" fill="#909090" stroke="#909090" stroke-width=".3">New York</text>
<text x="850" y="475" font-size="11.9" letter-spacing="0.35" text-anchor="middle" dominant-baseline="central" font-weight="normal" fill="#909090" stroke="#909090" stroke-width=".3">University</text>
<text x="931" y="342" font-size="12" letter-spacing="1.6" text-anchor="middle" dominant-baseline="central" font-weight="normal" transform="translate(931 0) scale(0.91 1) translate(-931 0)" fill="#b6b6b6">ROSE HILL</text>
<text x="968" y="291" font-size="12" letter-spacing="1.6" text-anchor="middle" dominant-baseline="central" font-weight="normal" transform="translate(968 0) scale(0.91 1) translate(-968 0)" fill="#b6b6b6">MURRAY</text>
<text x="968" y="307" font-size="12" letter-spacing="1.6" text-anchor="middle" dominant-baseline="central" font-weight="normal" transform="translate(968 0) scale(0.91 1) translate(-968 0)" fill="#b6b6b6">HILL</text>
<text x="1035" y="252" font-size="12" letter-spacing="1.6" text-anchor="middle" dominant-baseline="central" font-weight="normal" transform="translate(1035 0) scale(0.91 1) translate(-1035 0)" fill="#b6b6b6">TURTLE BAY</text>
<text x="980" y="376" font-size="12" letter-spacing="1.6" text-anchor="middle" dominant-baseline="central" font-weight="normal" transform="translate(980 0) scale(0.91 1) translate(-980 0)" fill="#b6b6b6">KIPS BAY</text>
<text x="932" y="412" font-size="12" letter-spacing="1.6" text-anchor="middle" dominant-baseline="central" font-weight="normal" transform="translate(932 0) scale(0.91 1) translate(-932 0)" fill="#b6b6b6">GRAMERCY</text>
<text x="962" y="497" font-size="12" letter-spacing="1.6" text-anchor="middle" dominant-baseline="central" font-weight="normal" transform="translate(962 0) scale(0.91 1) translate(-962 0)" fill="#b6b6b6">ALPHABET</text>
<text x="962" y="512" font-size="12" letter-spacing="1.6" text-anchor="middle" dominant-baseline="central" font-weight="normal" transform="translate(962 0) scale(0.91 1) translate(-962 0)" fill="#b6b6b6">CITY</text>
<text x="914" y="578" font-size="12" letter-spacing="1.6" text-anchor="middle" dominant-baseline="central" font-weight="normal" transform="translate(914 0) scale(0.91 1) translate(-914 0)" fill="#b6b6b6">LOWER</text>
<text x="914" y="593" font-size="12" letter-spacing="1.6" text-anchor="middle" dominant-baseline="central" font-weight="normal" transform="translate(914 0) scale(0.91 1) translate(-914 0)" fill="#b6b6b6">EAST SIDE</text>
<text x="877" y="620" font-size="12" letter-spacing="1.6" text-anchor="middle" dominant-baseline="central" font-weight="normal" transform="translate(877 0) scale(0.91 1) translate(-877 0)" fill="#b6b6b6">TWO</text>
<text x="877" y="635" font-size="12" letter-spacing="1.6" text-anchor="middle" dominant-baseline="central" font-weight="normal" transform="translate(877 0) scale(0.91 1) translate(-877 0)" fill="#b6b6b6">BRIDGES</text>
<text x="760" y="665" font-size="11.9" letter-spacing="0.35" text-anchor="middle" dominant-baseline="central" font-weight="normal" fill="#8c8c8c" stroke="#8c8c8c" stroke-width=".3">40 Wall Street</text>
<text x="711" y="697" font-size="11.9" letter-spacing="0.35" text-anchor="middle" dominant-baseline="central" font-weight="normal" fill="#8c8c8c" stroke="#8c8c8c" stroke-width=".3">Castle Clinton</text>
<text x="853" y="682" font-size="11.9" letter-spacing="0.35" text-anchor="middle" dominant-baseline="central" font-weight="normal" fill="#8c8c8c" stroke="#8c8c8c" stroke-width=".3">Brooklyn Bridge</text>
<text x="891" y="702" font-size="12" letter-spacing="1.6" text-anchor="middle" dominant-baseline="central" font-weight="normal" transform="translate(891 0) scale(0.91 1) translate(-891 0)" fill="#b6b6b6">DUMBO</text>
<text x="697" y="809" font-size="11.9" letter-spacing="0.35" text-anchor="middle" dominant-baseline="central" font-weight="normal" fill="#8c8c8c" stroke="#8c8c8c" stroke-width=".3">Colonels Row</text>
<text x="584" y="587" font-size="12" letter-spacing="1.6" text-anchor="middle" dominant-baseline="central" font-weight="normal" transform="translate(584 0) scale(0.91 1) translate(-584 0)" fill="#b6b6b6">DOWNTOWN</text>
<text x="584" y="602" font-size="12" letter-spacing="1.6" text-anchor="middle" dominant-baseline="central" font-weight="normal" transform="translate(584 0) scale(0.91 1) translate(-584 0)" fill="#b6b6b6">JERSEY CITY</text>
<text x="1172" y="315" font-size="12" letter-spacing="1.6" text-anchor="middle" dominant-baseline="central" font-weight="normal" transform="translate(1172 0) scale(0.91 1) translate(-1172 0)" fill="#b6b6b6">LONG ISLAND</text>
<text x="1172" y="330" font-size="12" letter-spacing="1.6" text-anchor="middle" dominant-baseline="central" font-weight="normal" transform="translate(1172 0) scale(0.91 1) translate(-1172 0)" fill="#b6b6b6">CITY</text>
<text x="1260" y="373" font-size="12" letter-spacing="1.6" text-anchor="middle" dominant-baseline="central" font-weight="normal" transform="translate(1260 0) scale(0.91 1) translate(-1260 0)" fill="#b6b6b6">SUNNYSIDE</text>
<text x="1245" y="419" font-size="12" letter-spacing="1.6" text-anchor="middle" dominant-baseline="central" font-weight="normal" transform="translate(1245 0) scale(0.91 1) translate(-1245 0)" fill="#b6b6b6">BLISSVILLE</text>
<text x="1156" y="517" font-size="12" letter-spacing="1.6" text-anchor="middle" dominant-baseline="central" font-weight="normal" transform="translate(1156 0) scale(0.91 1) translate(-1156 0)" fill="#b6b6b6">GREENPOINT</text>
<text x="1139" y="597" font-size="12" letter-spacing="1.6" text-anchor="middle" dominant-baseline="central" font-weight="normal" transform="translate(1139 0) scale(0.91 1) translate(-1139 0)" fill="#b6b6b6">WILLIAMSBURG</text>
<text x="991" y="722" font-size="12" letter-spacing="1.6" text-anchor="middle" dominant-baseline="central" font-weight="normal" transform="translate(991 0) scale(0.91 1) translate(-991 0)" fill="#b6b6b6">BROOKLYN</text>
<text x="991" y="737" font-size="12" letter-spacing="1.6" text-anchor="middle" dominant-baseline="central" font-weight="normal" transform="translate(991 0) scale(0.91 1) translate(-991 0)" fill="#b6b6b6">NAVY YARD</text>
<text x="982" y="802" font-size="12" letter-spacing="1.6" text-anchor="middle" dominant-baseline="central" font-weight="normal" transform="translate(982 0) scale(0.91 1) translate(-982 0)" fill="#b6b6b6">FORT</text>
<text x="982" y="817" font-size="12" letter-spacing="1.6" text-anchor="middle" dominant-baseline="central" font-weight="normal" transform="translate(982 0) scale(0.91 1) translate(-982 0)" fill="#b6b6b6">GREENE</text>
<text x="1059" y="811" font-size="12" letter-spacing="1.6" text-anchor="middle" dominant-baseline="central" font-weight="normal" transform="translate(1059 0) scale(0.91 1) translate(-1059 0)" fill="#b6b6b6">CLINTON</text>
<text x="1059" y="827" font-size="12" letter-spacing="1.6" text-anchor="middle" dominant-baseline="central" font-weight="normal" transform="translate(1059 0) scale(0.91 1) translate(-1059 0)" fill="#b6b6b6">HILL</text>
<text x="840" y="833" font-size="12" letter-spacing="1.6" text-anchor="middle" dominant-baseline="central" font-weight="normal" transform="translate(840 0) scale(0.91 1) translate(-840 0)" fill="#b6b6b6">COBBLE</text>
<text x="897" y="258" font-size="11.9" letter-spacing="0.35" text-anchor="middle" dominant-baseline="central" font-weight="normal" transform="rotate(29 897 258)" fill="#8c8c8c">W 37th St</text>
<text x="877" y="300" font-size="11.9" letter-spacing="0.35" text-anchor="middle" dominant-baseline="central" font-weight="normal" transform="rotate(29 877 300)" fill="#8c8c8c">W 30th St</text>
<text x="582" y="387" font-size="11.9" letter-spacing="0.35" text-anchor="middle" dominant-baseline="central" font-weight="normal" transform="rotate(12 582 387)" fill="#8c8c8c">1st St</text>
<text x="872" y="400" font-size="11.9" letter-spacing="0.35" text-anchor="middle" dominant-baseline="central" font-weight="normal" transform="rotate(-61 872 400)" fill="#8c8c8c">5th Ave</text>
<text x="902" y="486" font-size="11.9" letter-spacing="0.35" text-anchor="middle" dominant-baseline="central" font-weight="normal" transform="rotate(-61 902 486)" fill="#8c8c8c">2nd Ave</text>
<text x="951" y="453" font-size="11.9" letter-spacing="0.35" text-anchor="middle" dominant-baseline="central" font-weight="normal" transform="rotate(30 951 453)" fill="#8c8c8c">E 14th St</text>
<text x="1200" y="549" font-size="11.9" letter-spacing="0.35" text-anchor="middle" dominant-baseline="central" font-weight="normal" transform="rotate(-40 1200 549)" fill="#8c8c8c">Meeker Ave</text>
<text x="1086" y="559.5" font-size="11.9" letter-spacing="0.2" text-anchor="middle" dominant-baseline="central" font-weight="normal" transform="rotate(-46 1086 559.5)" fill="#8c8c8c">Wythe Ave</text>
<text x="1038.7" y="647" font-size="11.9" letter-spacing="0.35" text-anchor="middle" dominant-baseline="central" font-weight="normal" transform="rotate(-85 1038.7 647)" fill="#8c8c8c">Kent Ave</text>
<text x="1221.5" y="620" font-size="11.9" letter-spacing="0.35" text-anchor="middle" dominant-baseline="central" font-weight="normal" transform="rotate(-13 1221.5 620)" fill="#8c8c8c">Grand St</text>
<text x="1155.5" y="655" font-size="11.9" letter-spacing="0.35" text-anchor="middle" dominant-baseline="central" font-weight="normal" transform="rotate(80 1155.5 655)" fill="#8c8c8c">Union Ave</text>
<text x="1112" y="700" font-size="11.9" letter-spacing="0.35" text-anchor="middle" dominant-baseline="central" font-weight="normal" transform="rotate(50 1112 700)" fill="#8c8c8c">Lee Ave</text>
<text x="1277" y="694" font-size="11.9" letter-spacing="0.35" text-anchor="middle" dominant-baseline="central" font-weight="normal" transform="rotate(-22 1277 694)" fill="#8c8c8c">Flushing Ave</text>
<text x="1026" y="765" font-size="11.9" letter-spacing="0.35" text-anchor="middle" dominant-baseline="central" font-weight="normal" transform="rotate(5 1026 765)" fill="#8c8c8c">Park Ave</text>
<text x="842" y="747.5" font-size="11.9" letter-spacing="0.35" text-anchor="middle" dominant-baseline="central" font-weight="normal" transform="rotate(-71 842 747.5)" fill="#8c8c8c">Furman St</text>
<text x="557.3" y="536" font-size="22.5" letter-spacing="0" text-anchor="end" dominant-baseline="central" font-weight="normal" transform="translate(557.3 0) scale(0.93 1) translate(-557.3 0)" fill="#666" stroke="#666" stroke-width=".55">Jersey City</text>
<text x="570" y="824" font-size="11.9" letter-spacing="0.35" text-anchor="end" dominant-baseline="central" font-weight="normal" fill="#8c8c8c" stroke="#8c8c8c" stroke-width=".3">Statue of Liberty</text>
<text x="521" y="716" font-size="11.9" letter-spacing="0.35" text-anchor="end" dominant-baseline="central" font-weight="normal" fill="#8c8c8c" stroke="#8c8c8c" stroke-width=".3">State Park</text>
<text x="1299" y="588" font-size="12" letter-spacing="1.6" text-anchor="start" dominant-baseline="central" font-weight="normal" transform="translate(1299 0) scale(0.91 1) translate(-1299 0)" fill="#b6b6b6">LINDEN HILL</text>
<text x="1288" y="268" font-size="11.9" letter-spacing="0.7" text-anchor="start" dominant-baseline="central" font-weight="normal" transform="rotate(-8 1288 268)" fill="#8c8c8c">Northern Blvd</text>
<text x="1297" y="333.5" font-size="11.9" letter-spacing="0.7" text-anchor="start" dominant-baseline="central" font-weight="normal" transform="rotate(11 1297 333.5)" fill="#8c8c8c">Queens Blvd</text>
<text x="1338" y="302" font-size="12" letter-spacing="1.6" text-anchor="start" dominant-baseline="central" font-weight="normal" transform="translate(1338 0) scale(0.91 1) translate(-1338 0)" fill="#c4c4c4">SUNNYSIDE</text>
<text x="1337" y="777" font-size="12" letter-spacing="1.6" text-anchor="start" dominant-baseline="central" font-weight="normal" transform="translate(1337 0) scale(0.91 1) translate(-1337 0)" fill="#c4c4c4">BUSHWICK</text>
<text x="1336" y="484" font-size="11.9" letter-spacing="0.35" text-anchor="start" dominant-baseline="central" font-weight="normal" transform="rotate(35 1336 484)" fill="#8c8c8c">56th Rd</text>
<text x="1123.5" y="795" font-size="11.9" letter-spacing="0.35" text-anchor="start" dominant-baseline="central" font-weight="normal" transform="rotate(84 1123.5 795)" fill="#8c8c8c">Bedford Ave</text>
<text x="1148" y="778" font-size="11.9" letter-spacing="0.35" text-anchor="start" dominant-baseline="central" font-weight="normal" transform="rotate(82 1148 778)" fill="#8c8c8c">Nostrand Ave</text>
<path id="bqe" d="M1233.500 526 L1262 505 Q1303 477 1337 439" fill="none"/>
<text font-size="11.900" fill="#8c8c8c" textLength="127" lengthAdjust="spacing"><textPath href="#bqe" textLength="127" lengthAdjust="spacing">Brooklyn-Queens Expy</textPath></text>
</g>
<g transform="translate(844.2 327.6)"><path d="M0 -1.700C-2.300 -5.600 -8 -9.700 -8 -15.300A8 8 0 0 1 8 -15.300C8 -9.700 2.300 -5.600 0 -1.700Z" fill="#fff" stroke="#333" stroke-width="2.200" stroke-linejoin="round"/></g>
<g transform="translate(590.3 454.7)"><path d="M0 -1.700C-2.300 -5.600 -8 -9.700 -8 -15.300A8 8 0 0 1 8 -15.300C8 -9.700 2.300 -5.600 0 -1.700Z" fill="#fff" stroke="#333" stroke-width="2.200" stroke-linejoin="round"/><text x="0" y="-11.600" font-size="10.500" font-weight="bold" text-anchor="middle" fill="#333">2</text></g>
<g transform="translate(816 430.3)"><path d="M0 -1.700C-2.300 -5.600 -8 -9.700 -8 -15.300A8 8 0 0 1 8 -15.300C8 -9.700 2.300 -5.600 0 -1.700Z" fill="#333" stroke="#333" stroke-width="2.200" stroke-linejoin="round"/><text x="0" y="-11.600" font-size="10.500" font-weight="bold" text-anchor="middle" fill="#fff">4</text></g>
<g transform="translate(1104 564)"><path d="M0 -1.700C-2.300 -5.600 -8 -9.700 -8 -15.300A8 8 0 0 1 8 -15.300C8 -9.700 2.300 -5.600 0 -1.700Z" fill="#333" stroke="#333" stroke-width="2.200" stroke-linejoin="round"/></g>
<g transform="translate(892 400)"><circle r="11.400" cy="2.200" fill="#000" opacity=".32" filter="url(#ds)"/><circle r="11.100" fill="#58585a"/><circle r="6.300" fill="none" stroke="#fff" stroke-width="1.200"/><rect x="-2.500" y="-2.500" width="5" height="5" rx=".7" fill="#fff"/></g>
<g transform="translate(895 539)"><circle r="11.400" cy="2.200" fill="#000" opacity=".32" filter="url(#ds)"/><circle r="11.100" fill="#58585a"/><circle r="6.300" fill="none" stroke="#fff" stroke-width="1.200"/><rect x="-2.500" y="-2.500" width="5" height="5" rx=".7" fill="#fff"/></g>
<g transform="translate(804.6 480.8)"><circle r="11.400" cy="2.200" fill="#000" opacity=".32" filter="url(#ds)"/><circle r="11.100" fill="#04806b"/><circle r="6.300" fill="none" stroke="#fff" stroke-width="1.200"/><path d="M-2 -3.300L3.400 0L-2 3.300Z" fill="#fff"/></g>
<g transform="translate(804.6 602)"><circle r="11.400" cy="2.200" fill="#000" opacity=".32" filter="url(#ds)"/><circle r="11.100" fill="#04806b"/><circle r="6.300" fill="none" stroke="#fff" stroke-width="1.200"/><path d="M-2 -3.300L3.400 0L-2 3.300Z" fill="#fff"/></g>
</svg></div>
<div id="pshadow"></div>
<div id="zoomctl">
  <div class="abs" style="left:0;top:32px;width:30px;height:1px;background:#c9c9c9"></div>
  <svg class="abs" style="left:0;top:0" width="30" height="64" viewBox="0 0 30 64"><path d="M9.500 15.500h11M15 10v11M9.500 48.500h11" stroke="#999" stroke-width="1.400"/></svg>
</div>

<div id="panel">
  <div id="phead"><span class="t" id="s_jobs" style="letter-spacing:-0.5px;left:13px;top:14px;font-size:12px;font-weight:bold;color:#737373">JOBS &amp; RESOURCES</span></div>
  <div id="pgroup"><span class="t" id="s_group" style="left:13px;top:10px;font-size:14px;color:#555">Equipment</span></div>
  <div class="row" style="top:74px;height:70px">
<svg class="abs" style="left:10.7px;top:12px" width="17" height="17" viewBox="0 0 17 17"><circle cx="8.500" cy="8.500" r="7.400" fill="none" stroke="#555" stroke-width="1.700"/><rect x="5.400" y="5.400" width="6.200" height="6.200" rx="1" fill="#555"/></svg>
<span class="t" id="s_r0t" style="letter-spacing:-0.21px;left:32.5px;top:12px;font-size:17px;color:#333">Truck #00001</span>
<svg class="abs" style="left:10.7px;top:39px" width="17" height="16" viewBox="0 0 17 16"><g fill="none" stroke="#5a5a5a" stroke-width="1.700" stroke-linejoin="round"><path d="M1 2.200h8.600v9H1z"/><path d="M9.600 5h3.600l2.600 3v3.200H9.600z"/><circle cx="4.400" cy="12.500" r="1.600" fill="#fff"/><circle cx="12.600" cy="12.500" r="1.600" fill="#fff"/><circle cx="5" cy="6" r="2.100"/><path d="M5 4.900V6l.9.600"/></g></svg>
<span class="t" id="s_r0a" style="letter-spacing:-0.7px;left:32.75px;top:41px;font-size:14px;color:#666">1:30 h</span>
<div class="sep" style="left:76.5px;top:40px"></div>
<svg class="abs" style="left:85.2px;top:39px" width="17" height="16" viewBox="0 0 17 16"><g fill="none" stroke="#5a5a5a" stroke-width="1.800" stroke-linejoin="round" stroke-linecap="round"><path d="M5 1.800h7l4 12.400H1z"/><path d="M8.500 4.600v2.200M8.500 9.400v2.800"/></g></svg>
<span class="t" id="s_r0b" style="letter-spacing:-0.2px;left:107.75px;top:41px;font-size:14px;color:#666">38 mi</span>
<div class="sep" style="left:150px;top:40px"></div>
<svg class="abs" style="left:159.95px;top:39px" width="16" height="16" viewBox="0 0 16 16"><g fill="none" stroke="#5a5a5a" stroke-width="1.700" stroke-linejoin="round" stroke-linecap="round"><path d="M1.400 1.400h7.200v13.200H1.400z"/><path d="M1.400 7h7.200"/><path d="M11 2.600l2.600 3.200v6.400c0 1.400-2.400 1.400-2.400 0V9"/></g></svg>
<span class="t" id="s_r0c" style="letter-spacing:-0.5px;left:181px;top:41px;font-size:14px;color:#666">80%</span>
<div class="sep" style="left:216.5px;top:40px"></div>
<svg class="abs" style="left:224.95px;top:38px" width="17" height="17" viewBox="0 0 17 17"><circle cx="8.500" cy="8.500" r="7.400" fill="none" stroke="#555" stroke-width="1.600"/><path d="M8.500 4.200l1.250 2.750 3 .3-2.250 2 .65 2.950L8.500 10.700l-2.650 1.500.65-2.950-2.250-2 3-.3z" fill="#555"/></svg>
<span class="t" id="s_r0d" style="letter-spacing:-0.8px;left:247.5px;top:41px;font-size:14px;color:#666">A</span>
</div>
<div class="row sel" style="top:144px;height:71px">
<svg class="abs" style="left:10.7px;top:12px" width="17" height="17" viewBox="0 0 17 17"><circle cx="8.500" cy="8.500" r="7.400" fill="none" stroke="#0f856f" stroke-width="1.700"/><path d="M6.400 4.900l5.600 3.600-5.600 3.600z" fill="#12846f"/></svg>
<span class="t" id="s_r1t" style="letter-spacing:0.1px;left:32.5px;top:12px;font-size:17px;color:#333">Truck #00002</span>
<svg class="abs" style="left:10.7px;top:39px" width="17" height="16" viewBox="0 0 17 16"><g fill="none" stroke="#5a5a5a" stroke-width="1.700" stroke-linejoin="round"><path d="M1 2.200h8.600v9H1z"/><path d="M9.600 5h3.600l2.600 3v3.200H9.600z"/><circle cx="4.400" cy="12.500" r="1.600" fill="#fff"/><circle cx="12.600" cy="12.500" r="1.600" fill="#fff"/><circle cx="5" cy="6" r="2.100"/><path d="M5 4.900V6l.9.600"/></g></svg>
<span class="t" id="s_r1a" style="letter-spacing:-0.07px;left:32.75px;top:41px;font-size:14px;color:#666">2:30 h</span>
<div class="sep" style="left:80px;top:40px"></div>
<svg class="abs" style="left:88.7px;top:39px" width="17" height="16" viewBox="0 0 17 16"><g fill="none" stroke="#5a5a5a" stroke-width="1.800" stroke-linejoin="round" stroke-linecap="round"><path d="M5 1.800h7l4 12.400H1z"/><path d="M8.500 4.600v2.200M8.500 9.400v2.800"/></g></svg>
<span class="t" id="s_r1b" style="letter-spacing:-0.65px;left:110.5px;top:41px;font-size:14px;color:#666">10 mi</span>
<div class="sep" style="left:150px;top:40px"></div>
<svg class="abs" style="left:159.95px;top:39px" width="16" height="16" viewBox="0 0 16 16"><g fill="none" stroke="#5a5a5a" stroke-width="1.700" stroke-linejoin="round" stroke-linecap="round"><path d="M1.400 1.400h7.200v13.200H1.400z"/><path d="M1.400 7h7.200"/><path d="M11 2.600l2.600 3.200v6.400c0 1.400-2.400 1.400-2.400 0V9"/></g></svg>
<span class="t" id="s_r1c" style="letter-spacing:-0.5px;left:181px;top:41px;font-size:14px;color:#666">20%</span>
<div class="sep" style="left:216.5px;top:40px"></div>
<svg class="abs" style="left:224.95px;top:38px" width="17" height="17" viewBox="0 0 17 17"><circle cx="8.500" cy="8.500" r="7.400" fill="none" stroke="#555" stroke-width="1.600"/><path d="M8.500 4.200l1.250 2.750 3 .3-2.250 2 .65 2.950L8.500 10.700l-2.650 1.500.65-2.950-2.250-2 3-.3z" fill="#555"/></svg>
<span class="t" id="s_r1d" style="letter-spacing:-1.3px;left:247.5px;top:41px;font-size:14px;color:#666">B</span>
</div>
<div class="row" style="top:215px;height:70px;border-bottom-color:#f1f1f1">
<svg class="abs" style="left:10.7px;top:12px" width="17" height="17" viewBox="0 0 17 17"><circle cx="8.500" cy="8.500" r="7.400" fill="none" stroke="#555" stroke-width="1.700"/><rect x="5.400" y="5.400" width="6.200" height="6.200" rx="1" fill="#555"/></svg>
<span class="t" id="s_r2t" style="letter-spacing:0.03px;left:32.5px;top:12px;font-size:17px;color:#333">Truck #00003</span>
<svg class="abs" style="left:10.7px;top:39px" width="17" height="16" viewBox="0 0 17 16"><g fill="none" stroke="#5a5a5a" stroke-width="1.700" stroke-linejoin="round"><path d="M1 2.200h8.600v9H1z"/><path d="M9.600 5h3.600l2.600 3v3.200H9.600z"/><circle cx="4.400" cy="12.500" r="1.600" fill="#fff"/><circle cx="12.600" cy="12.500" r="1.600" fill="#fff"/><circle cx="5" cy="6" r="2.100"/><path d="M5 4.900V6l.9.600"/></g></svg>
<span class="t" id="s_r2a" style="letter-spacing:0px;left:32.75px;top:41px;font-size:14px;color:#666">0:30 h</span>
<div class="sep" style="left:80.5px;top:40px"></div>
<svg class="abs" style="left:89.45px;top:39px" width="17" height="16" viewBox="0 0 17 16"><g fill="none" stroke="#5a5a5a" stroke-width="1.800" stroke-linejoin="round" stroke-linecap="round"><path d="M5 1.800h7l4 12.400H1z"/><path d="M8.500 4.600v2.200M8.500 9.400v2.800"/></g></svg>
<span class="t" id="s_r2b" style="letter-spacing:-0.36px;left:112px;top:41px;font-size:14px;color:#666">4 mi</span>
<div class="sep" style="left:145.5px;top:40px"></div>
<svg class="abs" style="left:155.45px;top:39px" width="16" height="16" viewBox="0 0 16 16"><g fill="none" stroke="#5a5a5a" stroke-width="1.700" stroke-linejoin="round" stroke-linecap="round"><path d="M1.400 1.400h7.200v13.200H1.400z"/><path d="M1.400 7h7.200"/><path d="M11 2.600l2.600 3.200v6.400c0 1.400-2.400 1.400-2.400 0V9"/></g></svg>
<span class="t" id="s_r2c" style="letter-spacing:-1.0px;left:177px;top:41px;font-size:14px;color:#666">76%</span>
<div class="sep" style="left:211px;top:40px"></div>
<svg class="abs" style="left:219.95px;top:38px" width="17" height="17" viewBox="0 0 17 17"><circle cx="8.500" cy="8.500" r="7.400" fill="none" stroke="#555" stroke-width="1.600"/><path d="M8.500 4.200l1.250 2.750 3 .3-2.250 2 .65 2.950L8.500 10.700l-2.650 1.500.65-2.950-2.250-2 3-.3z" fill="#555"/></svg>
<span class="t" id="s_r2d" style="letter-spacing:-0.8px;left:242px;top:41px;font-size:14px;color:#666">A</span>
</div>
</div>
<div id="scroll"></div>
</body>
</html>
